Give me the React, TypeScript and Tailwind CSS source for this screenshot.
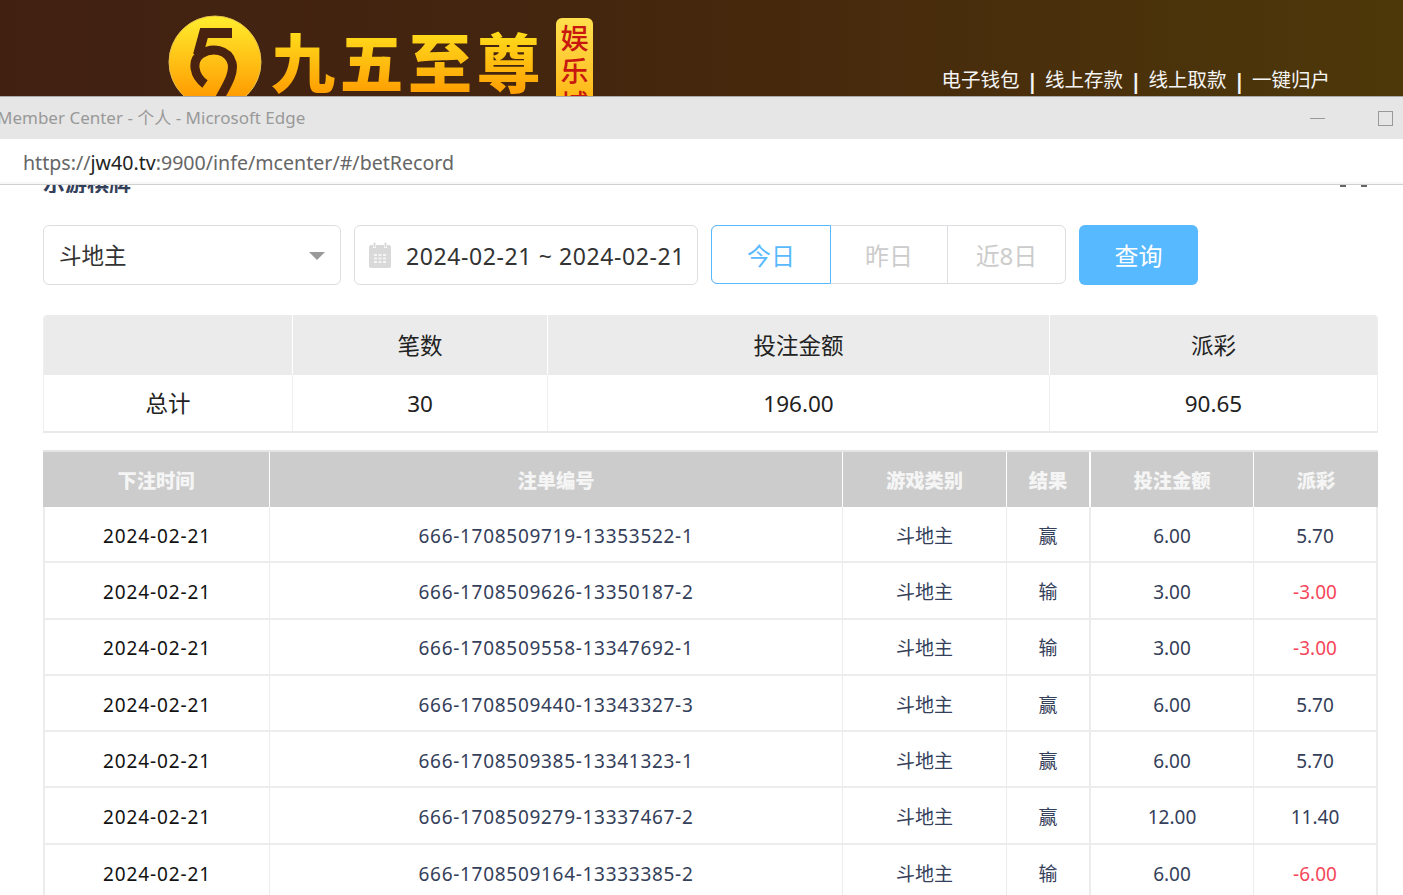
const cjk = "font-['Noto_Sans','Noto_Sans_CJK_SC',sans-serif]"

const rows = [
  ['666-1708509719-13353522-1', '赢', '6.00', '5.70'],
  ['666-1708509626-13350187-2', '输', '3.00', '-3.00'],
  ['666-1708509558-13347692-1', '输', '3.00', '-3.00'],
  ['666-1708509440-13343327-3', '赢', '6.00', '5.70'],
  ['666-1708509385-13341323-1', '赢', '6.00', '5.70'],
  ['666-1708509279-13337467-2', '赢', '12.00', '11.40'],
  ['666-1708509164-13333385-2', '输', '6.00', '-6.00'],
]

const Logo = () => (
  <div className="flex items-start">
    <svg width="94" height="94" viewBox="0 0 94 94" className="mt-[15px] shrink-0">
      <defs>
        <linearGradient id="coin" x1="0" y1="0" x2="0" y2="1">
          <stop offset="0" stopColor="#ffee2e" />
          <stop offset="0.9" stopColor="#ff9a00" />
        </linearGradient>
      </defs>
      <ellipse cx="47" cy="47" rx="46" ry="46" fill="url(#coin)" stroke="#e8c24a" strokeWidth="1" />
      <path d="M64 18H36L30 40" fill="none" stroke="#4a2210" strokeWidth="10" />
      <path d="M37 69C26 61 23 46 33 39C44 32 60 34 64 48C67 60 56 74 46 94" fill="none" stroke="#4a2210" strokeWidth="9" />
    </svg>
    <div className="ml-[9px] mt-[19px] bg-gradient-to-b from-[#ffe81f] to-[#ff9800] bg-clip-text font-['Noto_Sans_CJK_SC',sans-serif] text-[64px] font-black leading-[80px] tracking-[4.500px] text-transparent">
      九五至尊
    </div>
    <div className="ml-[11px] mt-[18px] flex h-[90px] w-[37px] shrink-0 flex-col items-center rounded-md bg-gradient-to-b from-[#ffe14d] to-[#ffb300] pt-[3px] font-['Noto_Sans_CJK_SC',sans-serif] text-[28px] font-medium leading-[33px] text-[#c8170f]">
      <span>娱</span>
      <span>乐</span>
      <span>城</span>
    </div>
  </div>
)

const Header = () => (
  <div className="flex h-[96px] items-start justify-between overflow-hidden bg-gradient-to-r from-[#412012] via-[#45270d] to-[#4d3809] pl-[168px] pr-[73px]">
    <Logo />
    <div className={`mt-[66px] flex items-center text-[19.500px] leading-[28px] text-[#f5f5f5] ${cjk}`}>
      <span>电子钱包</span>
      <span className="mx-[6.700px] text-[22px] font-bold">|</span>
      <span>线上存款</span>
      <span className="mx-[6.700px] text-[22px] font-bold">|</span>
      <span>线上取款</span>
      <span className="mx-[6.700px] text-[22px] font-bold">|</span>
      <span>一键归户</span>
    </div>
  </div>
)

const BrowserBars = () => (
  <div>
    <div className="flex h-[43px] items-center justify-between overflow-hidden border-t border-[#aaaaaa] bg-[#e6e6e6] pr-[10px]">
      <span className={`-ml-[3px] whitespace-nowrap text-[17px] text-[#999999] ${cjk}`}>Member Center - 个人 - Microsoft Edge</span>
      <div className="flex items-center gap-[53px]">
        <div className="h-px w-[15px] bg-[#999999]" />
        <div className="h-[15px] w-[15px] border border-[#999999]" />
      </div>
    </div>
    <div className={`flex h-[43px] items-center bg-white pl-[23px] pt-1 text-[19.600px] text-[#666666] ${cjk}`}>
      https://<span className="text-[#222222]">jw40.tv</span>:9900/infe/mcenter/#/betRecord
    </div>
    <div className="h-[3px] border-b border-[#d0d0d0] bg-[#f7f7f7]" />
  </div>
)

const CalendarIcon = () => (
  <svg width="24" height="26" viewBox="0 0 24 26" fill="#d9d9d9">
    <path d="M1 5a2 2 0 0 1 2-2h2v3h3V3h8v3h3V3h2a2 2 0 0 1 2 2v19a2 2 0 0 1-2 2H3a2 2 0 0 1-2-2Z" />
    <rect x="5.500" y="0.500" width="2" height="5" rx="1" />
    <rect x="16.500" y="0.500" width="2" height="5" rx="1" />
    <path fill="#f5f5f5" d="M6 12h3v2H6zM10.500 12h3v2h-3zM15 12h3v2h-3zM6 15.500h3v2H6zM10.500 15.500h3v2h-3zM15 15.500h3v2h-3zM6 19h3v2H6zM10.500 19h3v2h-3zM15 19h3v2h-3z" />
  </svg>
)

const Filters = () => (
  <div className="flex items-start">
    <div className="flex h-[60px] w-[298px] items-center justify-between rounded-md border border-[#dcdee2] pl-[15px] pr-[15px] pt-[2px] text-[22.500px] text-[#333333]">
      <span>斗地主</span>
      <span className="h-0 w-0 border-x-[8px] border-t-[8px] border-x-transparent border-t-[#999999]" />
    </div>
    <div className="ml-[13px] flex h-[60px] w-[344px] items-center rounded-md border border-[#dcdee2] pl-[13px] text-[23px] tracking-[0.600px] text-[#333333]">
      <CalendarIcon />
      <span className="ml-[14px] mt-[2px] whitespace-nowrap">2024-02-21 ~ 2024-02-21</span>
    </div>
    <div className="ml-[13px] flex h-[59px] w-[355px] rounded-md border border-[#dcdee2] text-[24px] text-[#cccccc]">
      <div className="-my-px -ml-px flex w-[120px] items-center justify-center rounded-l-md border border-[#57b9ff] pt-[2px] text-[#57b9ff]">今日</div>
      <div className="flex w-[117px] items-center justify-center border-r border-[#dcdee2] pt-[2px]">昨日</div>
      <div className="flex flex-1 items-center justify-center pt-[2px]">近8日</div>
    </div>
    <div className="ml-[13px] flex h-[60px] w-[119px] items-center justify-center rounded-md bg-[#57b9ff] pt-[2px] text-[24px] text-white">查询</div>
  </div>
)

const Summary = () => (
  <div className="mt-[30px] overflow-hidden rounded-t-sm border-x border-b-2 border-x-[#eeeeee] border-b-[#e8e8e8] text-[22.500px] text-[#222222]">
    <div className="grid h-[60px] grid-cols-[249px_255px_502px_1fr] bg-[#ebebeb]">
      <div className="border-r border-white" />
      <div className="flex items-center justify-center border-r border-white pt-[2px]">笔数</div>
      <div className="flex items-center justify-center border-r border-white pt-[2px]">投注金额</div>
      <div className="flex items-center justify-center pt-[2px]">派彩</div>
    </div>
    <div className="grid h-[56px] grid-cols-[249px_255px_502px_1fr]">
      <div className="flex items-center justify-center border-r border-[#eeeeee] pt-[2px]">总计</div>
      <div className="flex items-center justify-center border-r border-[#eeeeee] pt-[2px]">30</div>
      <div className="flex items-center justify-center border-r border-[#eeeeee] pt-[2px]">196.00</div>
      <div className="flex items-center justify-center pt-[2px]">90.65</div>
    </div>
  </div>
)

const BetTable = () => (
  <div className="mt-[17px] border-t-2 border-[#e4e4e4]">
    <div className="grid h-[55px] grid-cols-[227px_573px_164px_84px_163px_1fr] bg-[#cccccc] text-[19.300px] font-black text-[#f5f5f5]">
      <div className="flex items-center justify-center border-r border-white pt-[3px]">下注时间</div>
      <div className="flex items-center justify-center border-r border-white pt-[3px]">注单编号</div>
      <div className="flex items-center justify-center border-r border-white pt-[3px]">游戏类别</div>
      <div className="flex items-center justify-center border-r-2 border-white pt-[3px]">结果</div>
      <div className="flex items-center justify-center border-r border-white pt-[3px]">投注金额</div>
      <div className="flex items-center justify-center pt-[3px]">派彩</div>
    </div>
    {rows.map((row, i) => (
      <div key={i} className="grid h-[56.300px] grid-cols-[225px_573px_164px_84px_163px_1fr] border-x-2 border-b-2 border-[#ececec] text-[19px] text-[#34405a]">
        <div className="flex items-center justify-center border-r border-[#ececec] pt-[4px] tracking-[0.900px] text-[#111111]">2024-02-21</div>
        <div className="flex items-center justify-center border-r border-[#ececec] pt-[4px] tracking-[0.700px]">{row[0]}</div>
        <div className="flex items-center justify-center border-r border-[#ececec] pt-[4px]">斗地主</div>
        <div className="flex items-center justify-center border-r-2 border-[#ececec] pt-[4px]">{row[1]}</div>
        <div className="flex items-center justify-center border-r border-[#ececec] pt-[4px]">{row[2]}</div>
        <div className={row[3].startsWith('-') ? 'flex items-center justify-center pt-[4px] text-[#f5475b]' : 'flex items-center justify-center pt-[4px]'}>{row[3]}</div>
      </div>
    ))}
  </div>
)

const App = (): JSX.Element => {
  return (
    <div className={`h-[895px] overflow-hidden bg-white ${cjk}`}>
      <Header />
      <BrowserBars />
      <div className="pl-[43px] pr-[25px]">
        <div className="flex h-[8px] items-end justify-between overflow-hidden">
          <span className="text-[22px] font-bold leading-[22px] text-[#34405a]">示游棋牌</span>
          <div className="mr-[11px] flex gap-[15px] self-start">
            <div className="h-[2px] w-[6px] bg-[#666666]" />
            <div className="h-[2px] w-[6px] bg-[#666666]" />
          </div>
        </div>
        <div className="h-[32px]" />
        <Filters />
        <Summary />
        <BetTable />
      </div>
    </div>
  )
}

export default App
